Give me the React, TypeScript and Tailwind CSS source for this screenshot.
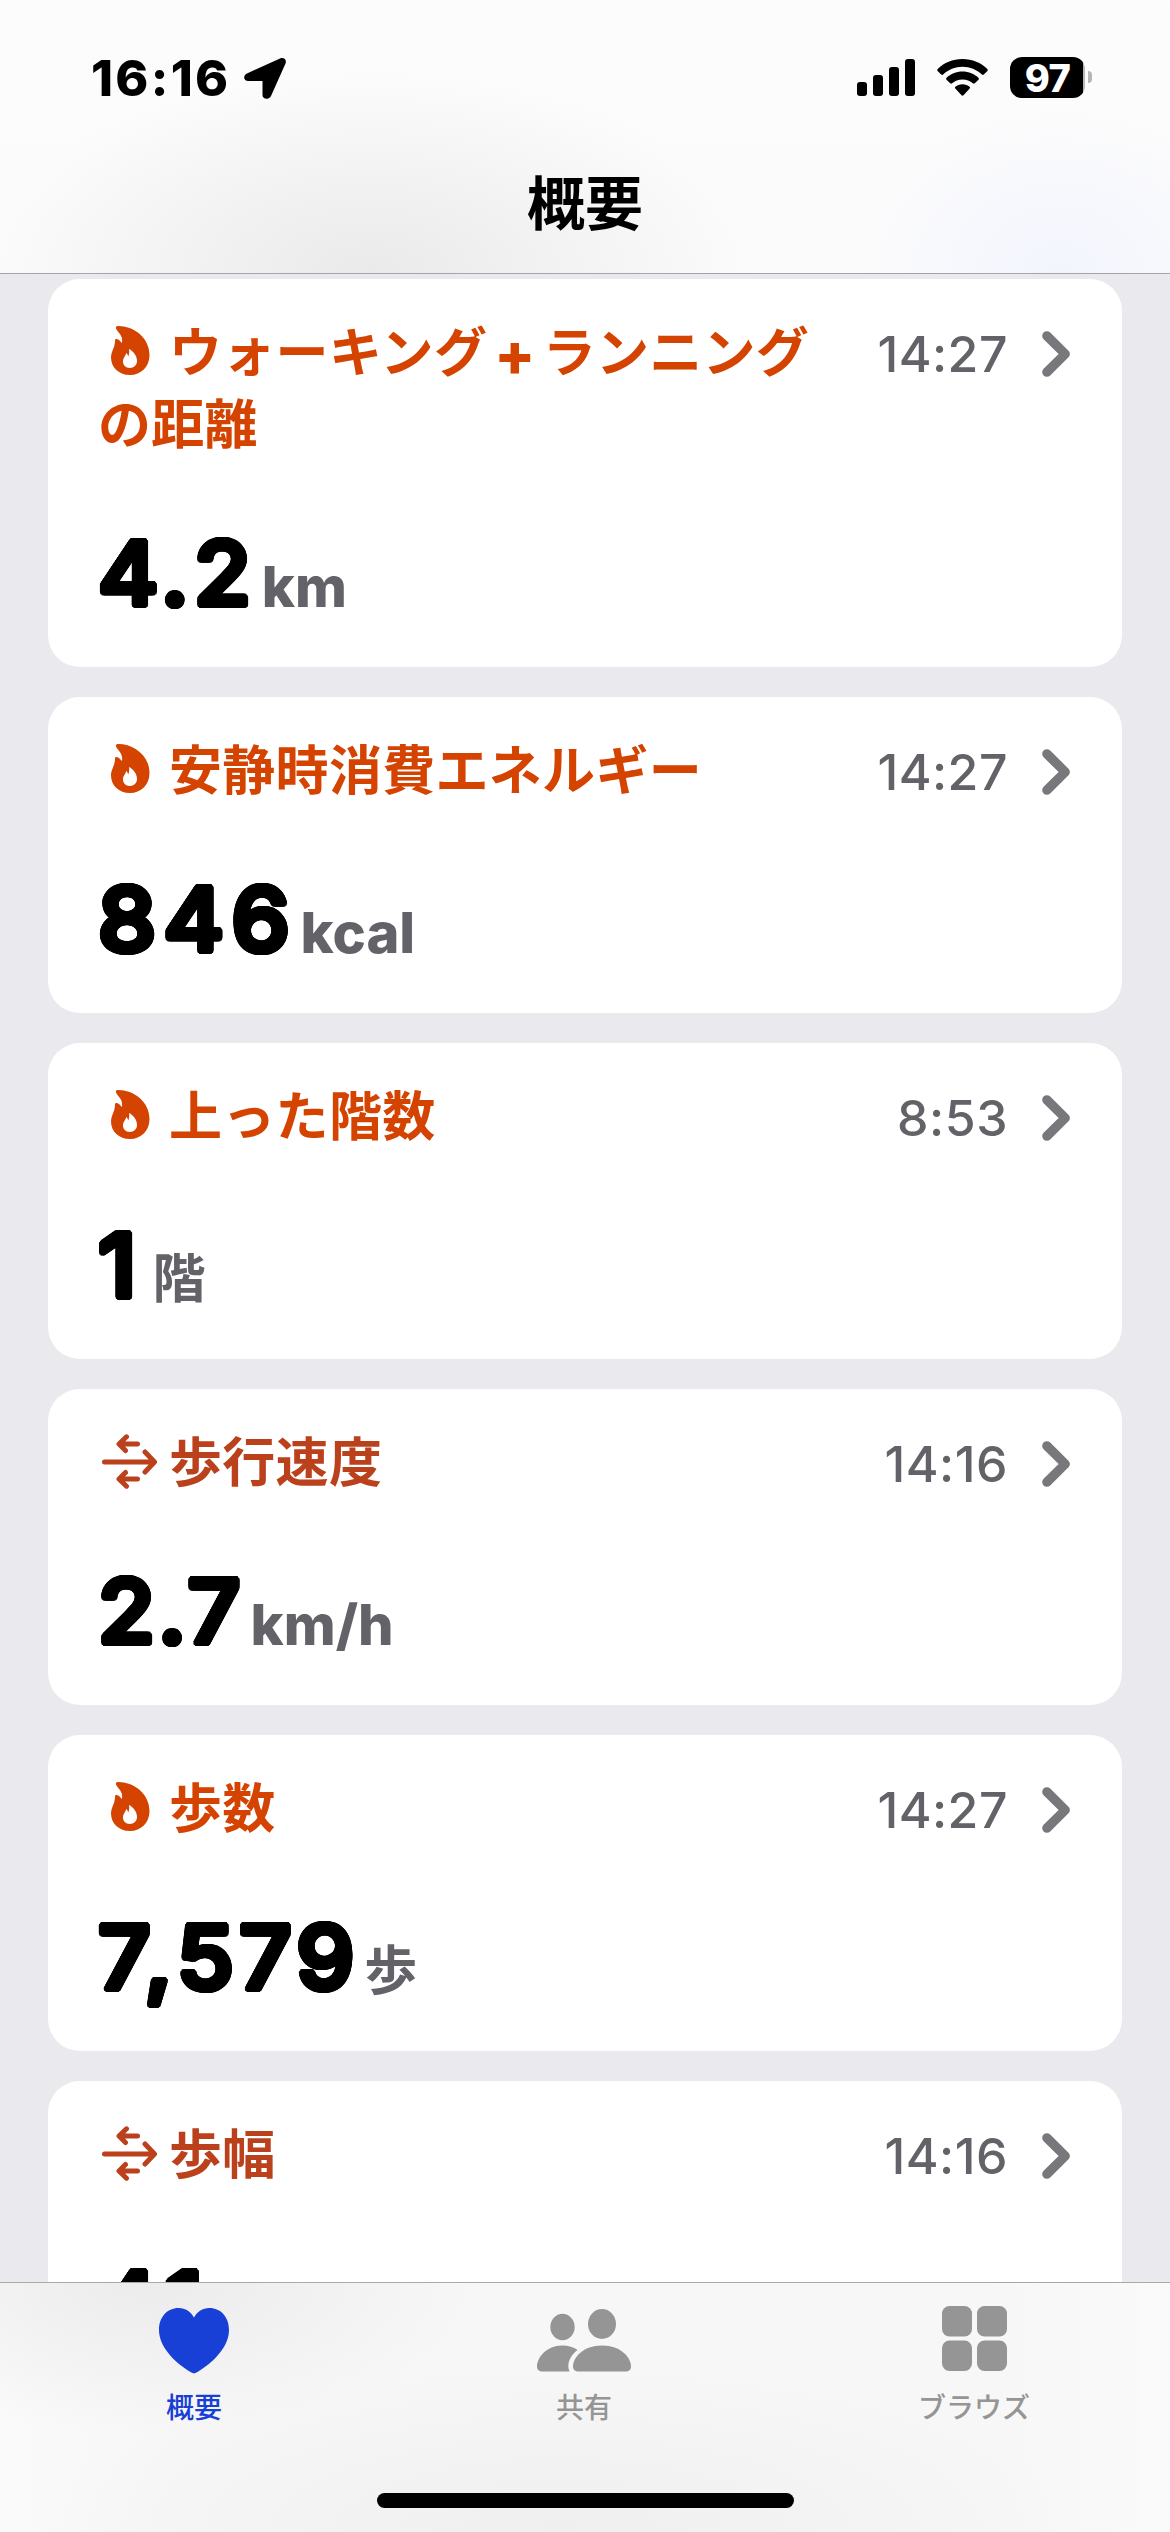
import React from 'react';

type Kind = 'activity' | 'mobility';

interface Metric {
  kind: Kind;
  title: string;
  time: string;
  value: string;
  spacing: string;
  unit?: string;
  cjkUnit?: boolean;
  tall?: boolean;
}

const metrics: Metric[] = [
  { kind: 'activity', title: 'ウォーキング+ランニングの距離', time: '14:27', value: '4.2', spacing: 'tracking-[5px] mr-[13px]', unit: 'km', tall: true },
  { kind: 'activity', title: '安静時消費エネルギー', time: '14:27', value: '846', spacing: 'tracking-[7px] mr-[13px]', unit: 'kcal' },
  { kind: 'activity', title: '上った階数', time: '8:53', value: '1', spacing: 'tracking-[8px] mr-[10px]', unit: '階', cjkUnit: true },
  { kind: 'mobility', title: '歩行速度', time: '14:16', value: '2.7', spacing: 'tracking-[3px] mr-[14px]', unit: 'km/h' },
  { kind: 'activity', title: '歩数', time: '14:27', value: '7,579', spacing: 'tracking-[5px] mr-[17px]', unit: '歩', cjkUnit: true },
  { kind: 'mobility', title: '歩幅', time: '14:16', value: '41', spacing: 'tracking-[8px]' },
];

// A ring of shadows thickens the digits and rounds off their ends
const roundShadow = Array.from({ length: 24 }, (_, i) => {
  const a = (i / 24) * Math.PI * 2;
  return `${(Math.cos(a) * 3).toFixed(2)}px ${(Math.sin(a) * 3).toFixed(2)}px 0 #000`;
}).join(', ');

function FlameIcon() {
  return (
    <svg className="inline-block w-[39px] h-[49px] ml-[13px] mr-[19px] align-[-3px]" viewBox="0 0 39 49" fill="currentColor" fillRule="evenodd">
      <path d="M7.5 0C22 0 38.5 11 38.5 29C38.5 41 30 49 19 49C8 49 0 41.5 0 31.5C0 25 4 22 4 14.5C4 12.5 6 12.5 8 14L11 17C12 11 9 8 5.8 4C4 1.5 5 0 7.5 0ZM18 23C22 25 26 29.5 26 35C26 39 23 42 18.7 42C14.5 42 12 39 12 35.5C12 31.5 14.5 30.5 15.2 27C16.5 28 17 29.5 17.3 30.5C18.2 28 18.5 25.5 18 23Z" />
    </svg>
  );
}

function ArrowsIcon() {
  return (
    <svg className="inline-block w-[55px] h-[55px] ml-1 mr-3 align-[-7px]" viewBox="0 0 55 55" fill="none" stroke="currentColor" strokeWidth="5" strokeLinecap="round" strokeLinejoin="round">
      <path d="M35.5 10H18M24.5 2.8L17 10L23.5 16.5" />
      <path d="M2.5 28H52M43 18L52.5 28L43 38" />
      <path d="M35.5 45H18M23.5 38.5L17 45L24.5 52.2" />
    </svg>
  );
}

function StatusBar() {
  return (
    <div className="flex justify-between pl-[91px] pr-[78px] pt-[57px] h-[164px]">
      <div className="flex items-start">
        <span className="text-[50px] leading-[42px] font-extrabold tracking-[2.3px]">16:16</span>
        <svg className="w-[42px] h-[41px] ml-[14px] mt-px" viewBox="0 0 42 41">
          <path d="M36 .5C39.8-1 43 1.6 41.5 5.6L27 38C25.3 42 18.5 41.8 18.5 37V23H4.5C-1 23-1 17.2 3 15.4Z" />
        </svg>
      </div>
      <div className="flex items-start">
        <svg className="w-[58px] h-[38px] mt-px mr-[22px]" viewBox="0 0 58 38">
          <rect x="0" y="24" width="10" height="14" rx="3" />
          <rect x="16" y="17" width="10" height="21" rx="3" />
          <rect x="32" y="9" width="10" height="29" rx="3" />
          <rect x="48" y="1" width="10" height="37" rx="3" />
        </svg>
        <svg className="w-[51px] h-[37px] mt-[2px] mr-[22px]" viewBox="0 0 51 37">
          <path d="M25.5 0C35.5 0 44 3.8 50.3 9.9C50.9 10.5 50.9 11.3 50.4 11.9L46.8 15.5C46.2 16 45.5 16 44.9 15.5C39.7 10.7 33 7.8 25.5 7.8S11.3 10.7 6.1 15.5C5.5 16 4.8 16 4.2 15.5L.6 11.9C.1 11.3 .1 10.5 .7 9.9C7 3.8 15.5 0 25.5 0Z" />
          <path d="M25.5 12.6C31.9 12.6 37.2 15 41.4 18.8C42 19.4 42 20.1 41.5 20.7L37.8 24.3C37.2 24.9 36.5 24.9 35.9 24.3C33.1 21.9 29.6 20.4 25.5 20.4S17.9 21.9 15.1 24.3C14.5 24.9 13.8 24.9 13.2 24.3L9.5 20.7C9 20.1 9 19.4 9.6 18.8C13.8 15 19.1 12.6 25.5 12.6Z" />
          <path d="M25.5 25.3C28.4 25.3 30.8 26.3 32.6 27.8C33.2 28.3 33.2 29 32.7 29.5L26.5 36.2C25.9 36.8 25.1 36.8 24.5 36.2L18.3 29.5C17.8 29 17.8 28.3 18.4 27.8C20.2 26.3 22.6 25.3 25.5 25.3Z" />
        </svg>
        <div className="w-[75px] h-[41px] rounded-[12px] bg-linear-to-r from-black from-97% to-[#b8b8b8] to-97% flex items-center justify-center text-white text-[38px] leading-none font-extrabold tracking-[-0.5px]">
          97
        </div>
        <div className="w-1 h-3 ml-[3px] mt-[14px] rounded-r-full bg-[#b5b5b6]" />
      </div>
    </div>
  );
}

function MetricTitle({ kind, title }: { kind: Kind; title: string }) {
  const [first, second] = title.split('+');

  return (
    <h2 className={`${kind === 'activity' ? 'text-[#d44300]' : 'text-[#bb411c]'} w-[728px] text-[53px] leading-[72px] font-bold tracking-[0.3px] font-['Noto_Sans_CJK_JP',sans-serif] break-all`}>
      {kind === 'activity' ? <FlameIcon /> : <ArrowsIcon />}
      {first}
      {second && (
        <>
          <span className="mx-[7px] text-[60px] leading-none align-[-4px] font-extrabold font-['Inter',sans-serif]">+</span>
          {second}
        </>
      )}
    </h2>
  );
}

function MetricCard({ metric }: { metric: Metric }) {
  return (
    <section className={`${metric.tall ? 'h-[388px]' : 'h-[316px]'} shrink-0 bg-white rounded-[32px] pl-[50px] pr-[52px] pt-[34px] pb-[53px] flex flex-col justify-between`}>
      <div className="flex items-baseline">
        <MetricTitle kind={metric.kind} title={metric.title} />
        <span className="ml-auto text-[50px] leading-[72px] font-medium tracking-[0.5px] text-[#636268]">{metric.time}</span>
        <svg className="self-start w-7 h-[46px] ml-[34px] mt-[18px]" viewBox="0 0 28 46" fill="none" stroke="#78777c" strokeWidth="9.4" strokeLinecap="round" strokeLinejoin="round">
          <path d="M4.9 4.9L23.2 23L4.9 41.1" />
        </svg>
      </div>
      <div className="flex items-end">
        <span className={`${metric.spacing} inline-block origin-left scale-x-[1.05] text-[88px] leading-[82px] font-medium text-black`} style={{ textShadow: roundShadow }}>
          {metric.value}
        </span>
        {metric.unit && (
          <span className={`${metric.cjkUnit ? 'text-[53px] font-bold' : 'text-[56px] font-extrabold'} leading-[54px] text-[#636268]`}>{metric.unit}</span>
        )}
      </div>
    </section>
  );
}

function TabBar() {
  return (
    <footer className="h-[250px] shrink-0 border-t border-[#a9a9ad] bg-[radial-gradient(ellipse_330px_150px_at_150px_0px,#ececec,transparent),radial-gradient(ellipse_520px_170px_at_560px_250px,#efefef,transparent),linear-gradient(90deg,#fafafa,#f7f7f7_15%,#f7f7f7_85%,#fafafa)] flex flex-col">
      <nav className="grid grid-cols-3 h-[210px] text-[28px] leading-[40px] font-medium text-[#959595]">
        <div className="flex flex-col items-center pt-[25px] pr-[2px] text-[#183fd6]">
          <svg className="w-[70px] h-[66px]" viewBox="0 0 70 66" fill="currentColor">
            <path d="M35 9.5C31.8 3.7 26.4 0 19.7 0C8 0 0 9.3 0 21.7C0 38.5 14.5 53.5 32.4 64.6C34.2 65.7 35.8 65.7 37.6 64.6C55.5 53.5 70 38.5 70 21.7C70 9.3 62 0 50.3 0C43.6 0 38.2 3.7 35 9.5Z" />
          </svg>
          <span className="mt-[14px]">概要</span>
        </div>
        <div className="flex flex-col items-center pt-[26px] pr-[2px]">
          <svg className="w-[94px] h-[63px]" viewBox="0 0 94 63" fill="currentColor">
            <ellipse cx="25.5" cy="18" rx="12.2" ry="13.2" />
            <ellipse cx="65" cy="15" rx="14" ry="15" />
            <path d="M25.5 36.5C31.5 36.5 36.5 38 40.5 41C34 46 29 54 32.5 62.5H6C2 62.5 0 60.8 0 57.5C0 49 9 36.5 25.5 36.5Z" />
            <path d="M65 36.5C84 36.5 94 48.5 94 57.5C94 60.8 92 62.5 88 62.5H42C38 62.5 36 60.8 36 57.5C36 48.5 46 36.5 65 36.5Z" />
          </svg>
          <span className="mt-[16px]">共有</span>
        </div>
        <div className="flex flex-col items-center pt-[23px] pr-[2px]">
          <svg className="w-[65px] h-[65px]" viewBox="0 0 65 65" fill="currentColor">
            <rect x="0" y="0" width="30" height="30.5" rx="7.5" />
            <rect x="35" y="0" width="30" height="30.5" rx="7.5" />
            <rect x="0" y="34.5" width="30" height="30.5" rx="7.5" />
            <rect x="35" y="34.5" width="30" height="30.5" rx="7.5" />
          </svg>
          <span className="mt-[17px]">ブラウズ</span>
        </div>
      </nav>
      <div className="w-[417px] h-[15px] rounded-full bg-black mx-auto" />
    </footer>
  );
}

function App() {
  return (
    <div className="w-[1170px] h-[2532px] flex flex-col overflow-hidden bg-[#eaeaee] text-black font-['Inter','Noto_Sans_CJK_JP',sans-serif]">
      <header className="h-[274px] shrink-0 border-b border-[#a5a5a9] bg-[radial-gradient(ellipse_380px_200px_at_370px_273px,#eaeaea,transparent),radial-gradient(ellipse_200px_160px_at_1060px_273px,#f3f5fe,transparent),linear-gradient(#fcfcfc,#fbfbfc)]">
        <StatusBar />
        <h1 className="text-center text-[58px] leading-[72px] font-bold font-['Noto_Sans_CJK_JP',sans-serif]">概要</h1>
      </header>
      <main className="flex-1 min-h-0 overflow-hidden px-12 pt-[5px] flex flex-col gap-[30px]">
        {metrics.map((metric) => (
          <MetricCard key={metric.title} metric={metric} />
        ))}
      </main>
      <TabBar />
    </div>
  );
}

export default App;
